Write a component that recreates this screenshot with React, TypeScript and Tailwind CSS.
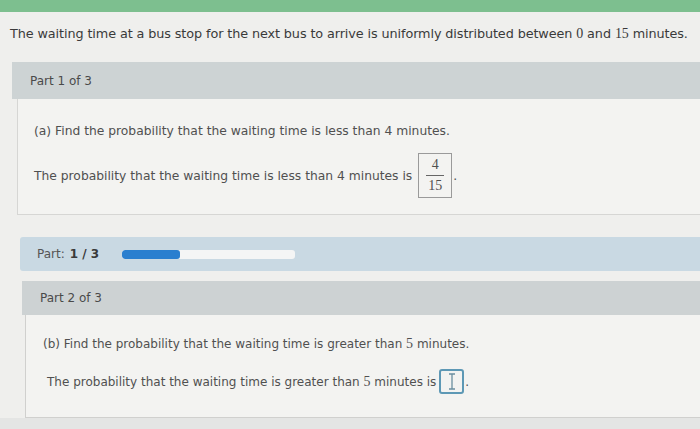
const sans = "font-['DejaVu_Sans','Liberation_Sans',sans-serif]";
const serif = "font-['Liberation_Serif',serif]";

function Num({ children }: { children: React.ReactNode }) {
  return <span className={`${serif} text-[14px]`}>{children}</span>;
}

export default function App() {
  return (
    <div className={`w-[700px] h-[429px] overflow-hidden bg-[#efefed] ${sans} text-[#444]`}>
      {/* top green strip */}
      <div className="h-[12px] bg-[#7dbf8f]" />

      {/* problem statement */}
      <p className="pl-[10px] pt-[11px] text-[12.8px] text-[#3a3a3a] tracking-[-0.1px]">
        The waiting time at a bus stop for the next bus to arrive is uniformly distributed between <Num>0</Num> and <Num>15</Num> minutes.
      </p>

      {/* part 1 */}
      <div className="ml-[12px] mt-[18px]">
        <div className="h-[37px] bg-[#cdd3d4] flex items-center pl-[18px] text-[12px] text-[#4a4a4a]">
          Part 1 of 3
        </div>
        <div className="ml-[5px] h-[116px] border-l border-b border-[#d6d6d4] bg-[#f3f3f1] pl-[16px] pt-[23px] text-[12.3px] text-[#505050]">
          <p>(a) Find the probability that the waiting time is less than 4 minutes.</p>
          <div className="mt-[13px] flex items-center">
            <span>The probability that the waiting time is less than 4 minutes is</span>
            <span className="ml-[6px] w-[34px] h-[45px] border border-[#9a9a9a] flex flex-col items-center justify-center">
              <span className={`${serif} text-[14px] leading-[16px]`}>4</span>
              <span className="w-[18px] h-px bg-[#666] my-[2px]" />
              <span className={`${serif} text-[14px] leading-[16px]`}>15</span>
            </span>
            <span className="ml-[1px]">.</span>
          </div>
        </div>
      </div>

      {/* progress */}
      <div className="ml-[20px] mt-[22px] h-[34px] bg-[#c9d9e3] rounded-l-[3px] flex items-center pl-[17px] text-[12px] text-[#555]">
        <span>Part:</span>
        <span className="ml-[5px] font-bold text-[#3a3a3a]">1 / 3</span>
        <div className="ml-[23px] w-[173px] h-[9px] bg-[#f4f5f5] rounded-[3px] overflow-hidden">
          <div className="w-[58px] h-full bg-[#2a7fcf] rounded-[3px]" />
        </div>
      </div>

      {/* part 2 */}
      <div className="ml-[22px] mt-[10px]">
        <div className="h-[34px] bg-[#cdd2d3] flex items-center pl-[18px] text-[12px] text-[#4a4a4a]">
          Part 2 of 3
        </div>
        <div className="ml-[3px] h-[103px] border-l border-b border-[#d0d0ce] bg-[#f3f3f1] pl-[17px] pt-[18px] text-[12px] text-[#505050]">
          <p>(b) Find the probability that the waiting time is greater than <Num>5</Num> minutes.</p>
          <div className="mt-[15px] flex items-center">
            <span className="ml-[4px]">The probability that the waiting time is greater than <Num>5</Num> minutes is</span>
            <span className="ml-[3px] w-[25px] h-[25px] border-2 border-[#5d98b5] rounded-[3px] flex items-center justify-center">
              <svg width="8" height="17" viewBox="0 0 8 17" fill="none" stroke="#6b8fa0" strokeWidth="1.3">
                <path d="M1 1h6M1 16h6M4 1v15" />
              </svg>
            </span>
            <span className="ml-[1px]">.</span>
          </div>
        </div>
      </div>
      <div className="h-[12px] bg-[#e4e5e4]" />
    </div>
  );
}
